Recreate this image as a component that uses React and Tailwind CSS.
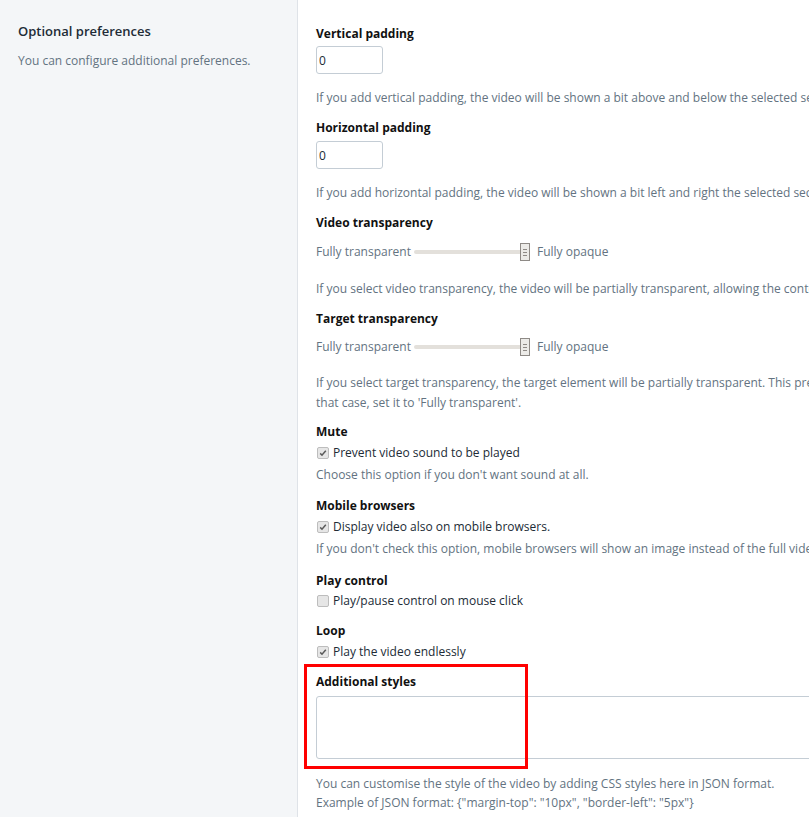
import { useState } from "react";

function Label({ children, className = "" }) {
  return <div className={`text-[12px] leading-[20px] font-bold text-[#111] ${className}`}>{children}</div>;
}

function Help({ children, className = "" }) {
  return <p className={`text-[12px] leading-[20px] text-[#637381] whitespace-nowrap ${className}`}>{children}</p>;
}

function Slider() {
  return (
    <div className="flex items-center h-[20px] text-[12px] text-[#637381]">
      <span>Fully transparent</span>
      <div className="relative ml-[3px] w-[116px] h-[20px] flex items-center">
        <div className="w-full h-[4px] bg-[#e3e0db] rounded-full" />
        <div className="absolute right-[0px] top-[1px] w-[10px] h-[18px] bg-[#ecebe8] border border-[#8e8a86] flex flex-col items-center justify-center gap-[2px]">
          <span className="w-[4px] h-px bg-[#8e8a86]" />
          <span className="w-[4px] h-px bg-[#8e8a86]" />
          <span className="w-[4px] h-px bg-[#8e8a86]" />
        </div>
      </div>
      <span className="ml-[7px]">Fully opaque</span>
    </div>
  );
}

function Check({ checked, label, className = "" }) {
  return (
    <label className={`flex items-center h-[20px] text-[12px] text-[#212b36] ${className}`}>
      <span className="ml-[1px] w-[12px] h-[12px] rounded-[2px] border border-[#bdbdbd] bg-[#e6e6e6] flex items-center justify-center">
        {checked && (
          <svg width="8" height="8" viewBox="0 0 8 8">
            <path d="M1.2 4.4 L3 6.2 L6.8 1.8" fill="none" stroke="#5a5a5a" strokeWidth="1.5" />
          </svg>
        )}
      </span>
      <span className="ml-[4px]">{label}</span>
    </label>
  );
}

export default function App() {
  const [styles, setStyles] = useState("");

  return (
    <div
      className="h-screen w-full flex overflow-hidden bg-white"
      style={{ fontFamily: "'Open Sans', 'Noto Sans', sans-serif" }}
    >
      {/* sidebar */}
      <div className="w-[298px] shrink-0 bg-[#f4f6f8] border-r border-[#dfe3e8] pl-[18px] pt-[21px]">
        <h2 className="text-[13px] leading-[20px] font-semibold text-[#212b36]">Optional preferences</h2>
        <p className="mt-[10px] text-[12px] leading-[20px] text-[#637381]">You can configure additional preferences.</p>
      </div>

      {/* settings */}
      <div className="flex-1 min-w-0 overflow-hidden pl-[18px] pt-[24px]">
        <div className="w-[640px]">
          <Label>Vertical padding</Label>
          <input
            defaultValue="0"
            className="mt-[2px] block w-[67px] h-[28px] px-[2px] border border-[#c4cdd5] rounded-[3px] text-[12px] text-[#212b36] outline-none"
          />
          <Help className="mt-[14px]">If you add vertical padding, the video will be shown a bit above and below the selected section of the page.</Help>

          <Label className="mt-[10px]">Horizontal padding</Label>
          <input
            defaultValue="0"
            className="mt-[3px] block w-[67px] h-[28px] px-[2px] border border-[#c4cdd5] rounded-[3px] text-[12px] text-[#212b36] outline-none"
          />
          <Help className="mt-[14px]">If you add horizontal padding, the video will be shown a bit left and right the selected section of the page.</Help>

          <Label className="mt-[10px]">Video transparency</Label>
          <div className="mt-[9px]">
            <Slider />
          </div>
          <Help className="mt-[17px]">If you select video transparency, the video will be partially transparent, allowing the content below to be seen.</Help>

          <Label className="mt-[10px]">Target transparency</Label>
          <div className="mt-[8px]">
            <Slider />
          </div>
          <p className="mt-[16px] text-[12px] leading-[20px] text-[#637381] whitespace-nowrap">
            If you select target transparency, the target element will be partially transparent. This prevents the target from hiding the video. In
            <br />
            that case, set it to 'Fully transparent'.
          </p>

          <Label className="mt-[9px]">Mute</Label>
          <Check checked label="Prevent video sound to be played" className="mt-[1px]" />
          <Help className="mt-[2px]">Choose this option if you don't want sound at all.</Help>

          <Label className="mt-[11px]">Mobile browsers</Label>
          <Check checked label="Display video also on mobile browsers." className="mt-[1px]" />
          <Help className="mt-[2px]">If you don't check this option, mobile browsers will show an image instead of the full video.</Help>

          <Label className="mt-[12px]">Play control</Label>
          <Check label="Play/pause control on mouse click" />

          <Label className="mt-[10px]">Loop</Label>
          <Check checked label="Play the video endlessly" className="mt-[1px]" />

          <div className="relative mt-[10px]">
            <Label>Additional styles</Label>
            <textarea
              value={styles}
              onChange={(e) => setStyles(e.target.value)}
              className="mt-[4px] block w-full h-[63px] border border-[#c4cdd5] rounded-[3px] resize-none outline-none text-[12px] p-[4px]"
            />
            {/* highlight marker */}
            <div className="absolute -left-[12px] -top-[8px] w-[224px] h-[105px] border-[3px] border-[#ff0000] pointer-events-none" />
          </div>
          <p className="mt-[15px] text-[12px] leading-[19px] text-[#637381]">
            You can customise the style of the video by adding CSS styles here in JSON format.
            <br />
            Example of JSON format: {'{"margin-top": "10px", "border-left": "5px"}'}
          </p>
        </div>
      </div>
    </div>
  );
}
